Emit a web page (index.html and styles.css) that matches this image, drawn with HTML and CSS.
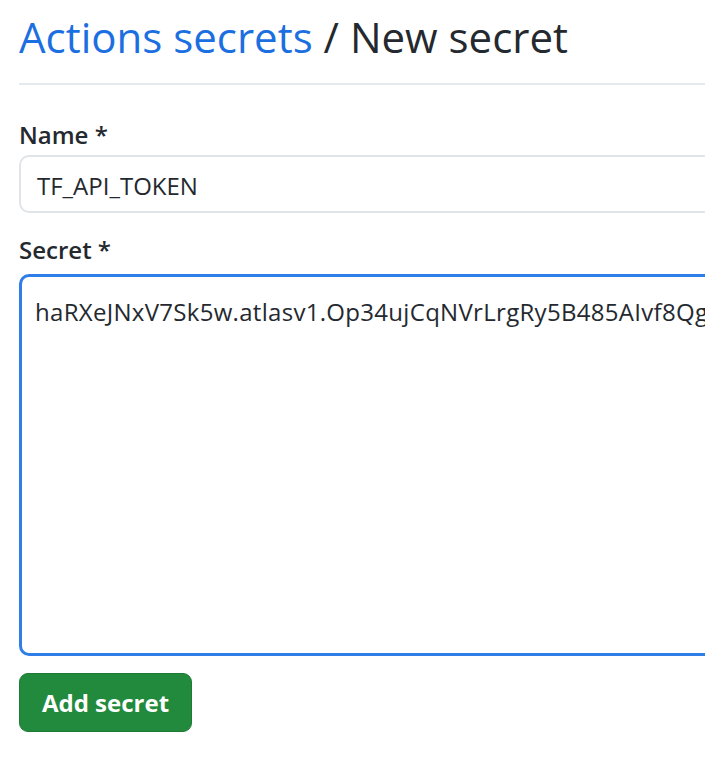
FILE: index.html
```html
<!DOCTYPE html>
<html>
<head>
<meta charset="utf-8">
<link rel="stylesheet" href="styles.css">
</head>
<body>
<div class="page">
  <h2 class="subhead"><a class="crumb" href="#">Actions secrets</a> / New secret</h2>
  <form class="form">
    <label class="label label-name">Name *</label>
    <div class="input">TF_API_TOKEN</div>
    <label class="label label-secret">Secret *</label>
    <div class="textarea">haRXeJNxV7Sk5w.atlasv1.Op34ujCqNVrLrgRy5B485AIvf8Qg</div>
    <button class="btn" type="button">Add secret</button>
  </form>
</div>
</body>
</html>
```
FILE: styles.css
```css
html, body { margin: 0; padding: 0; background: #fff; }
body { font-family: "Open Sans", "Noto Sans", sans-serif; color: #24292f; overflow: hidden; }
.page { padding: 0 0 0 19px; width: 760px; }
.subhead {
  margin: 0;
  padding: 9px 0 18px;
  font-weight: 400;
  font-size: 42px;
  line-height: 56px;
  border-bottom: 2px solid #e6eaee;
  color: #24292f;
  white-space: nowrap;
}
.crumb { color: #1b6fe0; text-decoration: none; }
.form { display: flex; flex-direction: column; align-items: flex-start; padding-top: 34px; }
.label { font-size: 24px; font-weight: 600; line-height: 32px; }
.label-name { margin-bottom: 4px; }
.label-secret { margin-bottom: 8px; }
.input {
  box-sizing: border-box;
  width: 740px; height: 58px;
  border: 2px solid #e1e4e8; border-radius: 10px;
  background: #fff;
  font-size: 24px; line-height: 51px;
  padding: 3px 0 0 16px;
  margin-bottom: 21px;
  white-space: nowrap;
}
.textarea {
  box-sizing: border-box;
  width: 740px; height: 382px;
  border: 3px solid #2f7de6; border-radius: 10px;
  font-size: 24px; line-height: 32px;
  letter-spacing: 0.3px;
  padding: 19px 13px;
  white-space: nowrap; overflow: hidden;
  margin-bottom: 17px;
}
.btn {
  box-sizing: border-box;
  width: 173px; height: 59px;
  display: flex; align-items: center; justify-content: center;
  background: #228a3c; color: #fff;
  border: 1px solid #1e7b35; border-radius: 9px;
  font-family: inherit; font-size: 24px; font-weight: 700;
  padding: 0;
}
```
